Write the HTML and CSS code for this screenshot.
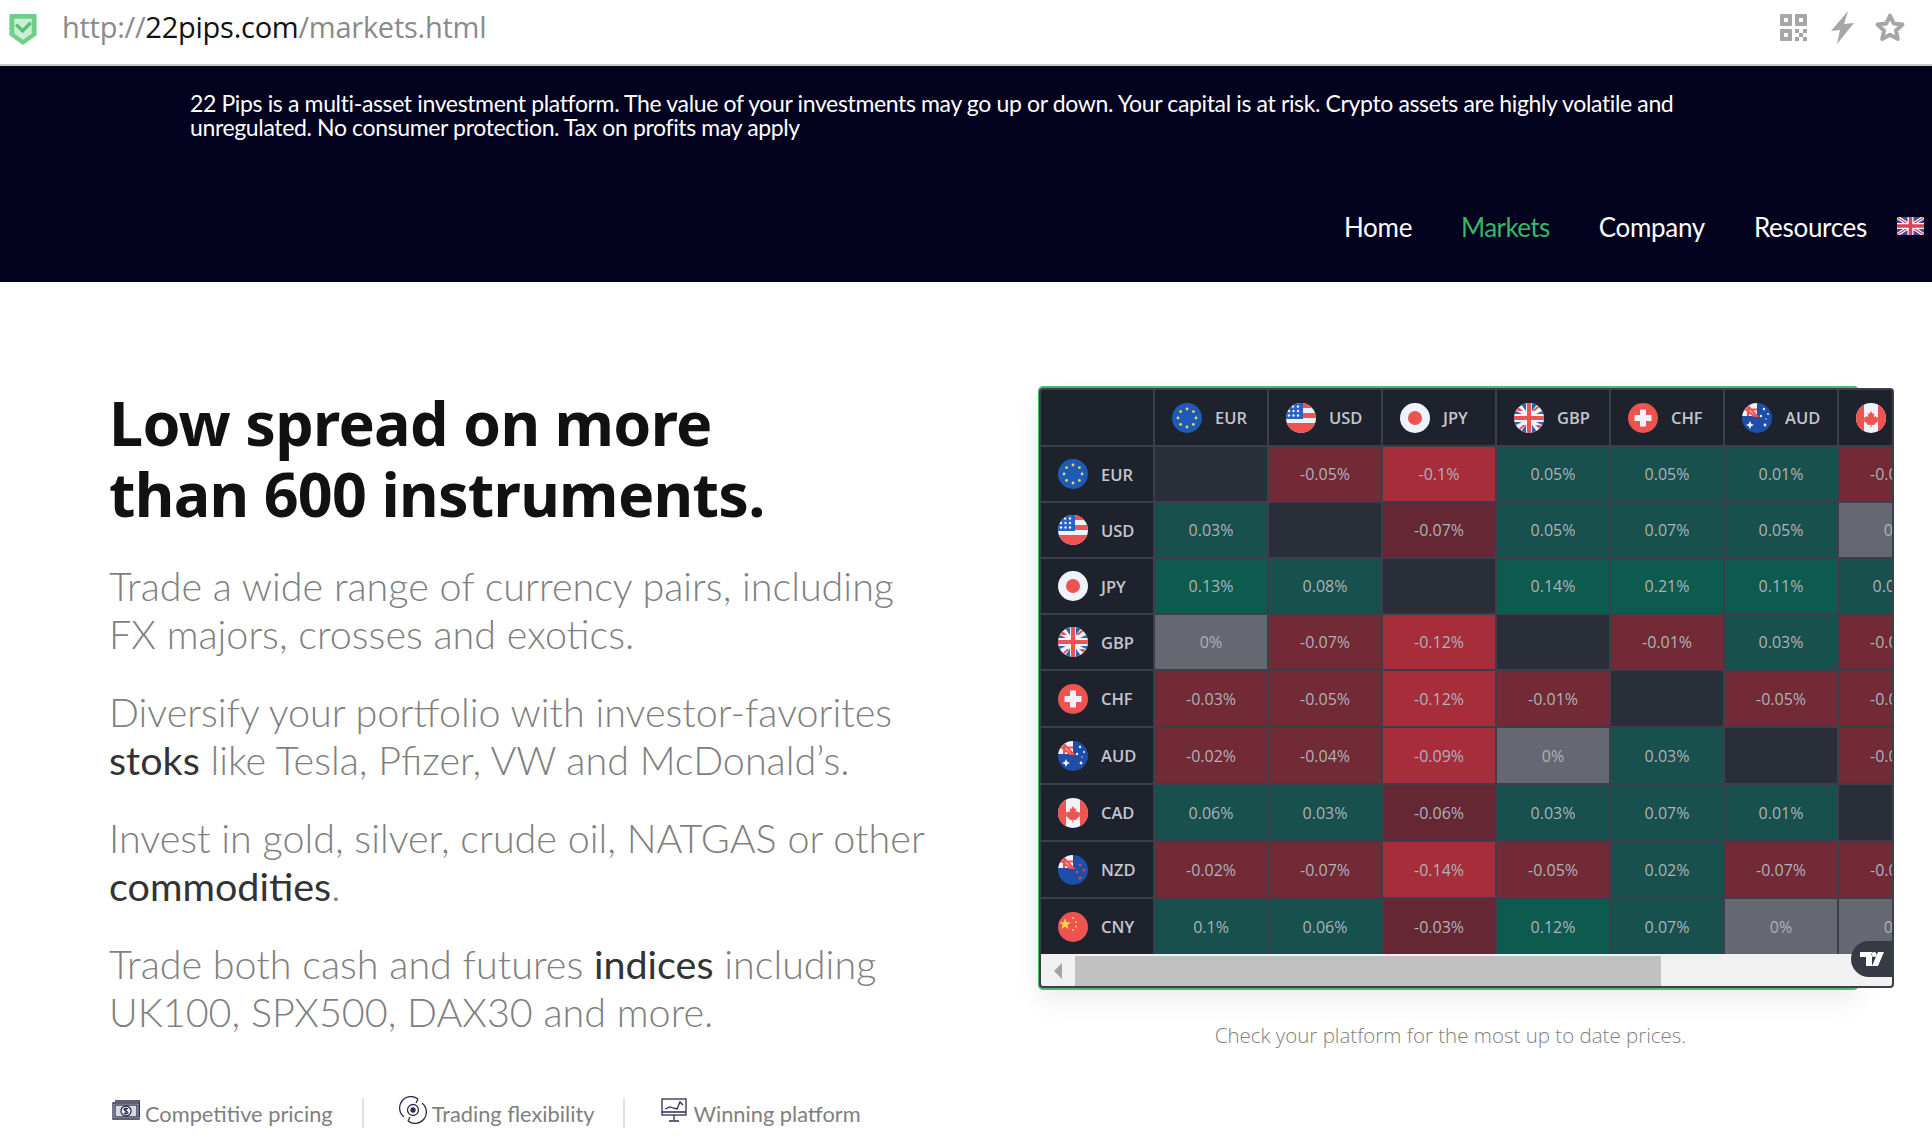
FILE: index.html
```html
<!DOCTYPE html>
<html lang="en">
<head>
  <meta charset="UTF-8">
  <title>22 Pips - Markets</title>
  <link rel="stylesheet" href="styles.css">
</head>
<body>
  <svg class="defs" width="0" height="0">
    <symbol id="f-eur" viewBox="0 0 30 30">
      <circle cx="15" cy="15" r="15" fill="#1e5bb8"/>
      <g fill="#f2d64b">
        <circle cx="15" cy="6" r="1.4"/><circle cx="21.4" cy="8.6" r="1.4"/><circle cx="24" cy="15" r="1.4"/><circle cx="21.4" cy="21.4" r="1.4"/>
        <circle cx="15" cy="24" r="1.4"/><circle cx="8.6" cy="21.4" r="1.4"/><circle cx="6" cy="15" r="1.4"/><circle cx="8.6" cy="8.6" r="1.4"/>
      </g>
    </symbol>
    <symbol id="f-usd" viewBox="0 0 30 30">
      <clipPath id="c-usd"><circle cx="15" cy="15" r="15"/></clipPath>
      <g clip-path="url(#c-usd)">
        <rect width="30" height="30" fill="#f0f3fa"/>
        <path d="M15 0h15v5H15zM15 10h15v5H15zM0 20h30v5H0z" fill="#ef5350"/>
        <path d="M0 25h30v5H0z" fill="#ef5350"/>
        <rect width="17" height="16" fill="#2962c4"/>
        <g fill="#f0f3fa">
          <circle cx="7" cy="3.5" r="1.2"/><circle cx="12" cy="3.5" r="1.2"/>
          <circle cx="3" cy="8" r="1.2"/><circle cx="7.5" cy="8" r="1.2"/><circle cx="12" cy="8" r="1.2"/>
          <circle cx="3" cy="12.5" r="1.2"/><circle cx="7.5" cy="12.5" r="1.2"/><circle cx="12" cy="12.5" r="1.2"/>
        </g>
      </g>
    </symbol>
    <symbol id="f-jpy" viewBox="0 0 30 30">
      <circle cx="15" cy="15" r="15" fill="#f0f3fa"/>
      <circle cx="15" cy="15" r="7" fill="#ef5350"/>
    </symbol>
    <symbol id="f-gbp" viewBox="0 0 30 30">
      <clipPath id="c-gbp"><circle cx="15" cy="15" r="15"/></clipPath>
      <g clip-path="url(#c-gbp)">
        <rect width="30" height="30" fill="#f0f3fa"/>
        <path d="M0 0l9 8H4L0 4zM30 30l-9-8h5l4 4zM30 0l-9 8h-3l9-8zM0 30l9-8h3l-9 8z" fill="#ef5350"/>
        <path d="M6 0h6v8zM18 0h6l-6 8zM6 30h6v-8zM18 30h6l-6-8zM0 7l8 4H0zM30 7l-8 4h8zM0 23l8-4H0zM30 23l-8-4h8z" fill="#2962c4"/>
        <path d="M13 0h4v13h13v4H17v13h-4V17H0v-4h13z" fill="#ef5350"/>
      </g>
    </symbol>
    <symbol id="f-chf" viewBox="0 0 30 30">
      <circle cx="15" cy="15" r="15" fill="#ef5350"/>
      <path d="M12 6.500h6V12h5.500v6H18v5.500h-6V18H6.500v-6H12z" fill="#f0f3fa"/>
    </symbol>
    <symbol id="f-aud" viewBox="0 0 30 30">
      <clipPath id="c-aud"><circle cx="15" cy="15" r="15"/></clipPath>
      <g clip-path="url(#c-aud)">
        <rect width="30" height="30" fill="#1e4fa8"/>
        <rect width="15" height="13" fill="#f0f3fa"/>
        <path d="M0 3l12 10h3L3 0H0zM0 6.500h15M6 0v13" stroke="#ef5350" stroke-width="2.200" fill="none"/>
        <g fill="#f0f3fa">
          <path d="M8 18l1.200 2.800L12 22l-2.800 1.200L8 26l-1.200-2.800L4 22l2.800-1.200z"/>
          <circle cx="22" cy="6" r="1.200"/><circle cx="26" cy="11" r="1"/><circle cx="19" cy="13" r="1.200"/><circle cx="23" cy="22" r="1.400"/><circle cx="24" cy="16" r=".7"/>
        </g>
      </g>
    </symbol>
    <symbol id="f-cad" viewBox="0 0 30 30">
      <clipPath id="c-cad"><circle cx="15" cy="15" r="15"/></clipPath>
      <g clip-path="url(#c-cad)">
        <rect width="30" height="30" fill="#f0f3fa"/>
        <path d="M0 0h8v30H0zM22 0h8v30h-8z" fill="#ef5350"/>
        <path d="M15 8l1.600 3 1.800-.8-.7 4 2-1.300.8 1.700 2-.3-1 2.700 1 .8-3.800 3-.3 1.300-2.900-.4v2.800h-1v-2.800l-2.900.4-.3-1.300-3.800-3 1-.8-1-2.700 2 .3.800-1.700 2 1.300-.7-4 1.800.8z" fill="#ef5350"/>
      </g>
    </symbol>
    <symbol id="f-nzd" viewBox="0 0 30 30">
      <clipPath id="c-nzd"><circle cx="15" cy="15" r="15"/></clipPath>
      <g clip-path="url(#c-nzd)">
        <rect width="30" height="30" fill="#1e4fa8"/>
        <rect width="15" height="13" fill="#f0f3fa"/>
        <path d="M0 3l12 10h3L3 0H0zM0 6.500h15M6 0v13" stroke="#ef5350" stroke-width="2.200" fill="none"/>
        <g fill="#d9445a">
          <circle cx="22" cy="10" r="1.300"/><circle cx="26" cy="15" r="1.300"/><circle cx="19" cy="17" r="1.300"/><circle cx="22" cy="23" r="1.500"/>
        </g>
      </g>
    </symbol>
    <symbol id="f-cny" viewBox="0 0 30 30">
      <circle cx="15" cy="15" r="15" fill="#ef5350"/>
      <path d="M7 6l1.500 4.200H13l-3.600 2.700 1.300 4.300L7 14.600l-3.700 2.600 1.300-4.300L1 10.200h4.500z" fill="#f7d64a"/>
      <g fill="#f7d64a"><circle cx="15" cy="6" r="1"/><circle cx="18" cy="10" r="1"/><circle cx="18" cy="14.500" r="1"/><circle cx="15" cy="18" r="1"/></g>
    </symbol>
  </svg>

  <div class="urlbar">
    <svg class="shield" viewBox="0 0 30 34">
      <path d="M2 1h26a1 1 0 0 1 1 1v21l-14 10L1 23V2a1 1 0 0 1 1-1z" fill="#6fcf87"/>
      <path d="M6 6h18v15l-9 6.500L6 21z" fill="#c9f0d3"/>
      <path d="M8 12l6.500 6.500L23 10" fill="none" stroke="#58bf75" stroke-width="3.500"/>
    </svg>
    <div class="url">http://<b>22pips.com</b>/markets.html</div>
    <div class="bar-icons">
      <svg class="qr" viewBox="0 0 27 27" fill="#a6a6a6">
        <path fill-rule="evenodd" d="M1 0h10a1 1 0 0 1 1 1v10a1 1 0 0 1-1 1H1a1 1 0 0 1-1-1V1a1 1 0 0 1 1-1zm3 4v4h4V4zM16 0h10a1 1 0 0 1 1 1v10a1 1 0 0 1-1 1H16a1 1 0 0 1-1-1V1a1 1 0 0 1 1-1zm3 4v4h4V4zM1 15h10a1 1 0 0 1 1 1v10a1 1 0 0 1-1 1H1a1 1 0 0 1-1-1V16a1 1 0 0 1 1-1zm3 4v4h4v-4z"/>
        <path d="M15 15h4v4h-4zM23 15h4v4h-4zM19 19h4v4h-4zM15 23h4v4h-4zM23 23h4v4h-4z"/>
      </svg>
      <svg class="bolt" viewBox="0 0 23 33"><path d="M17 0L0 20l9-1-3 14L23 12l-10 1z" fill="#a6a6a6"/></svg>
      <svg class="star" viewBox="0 0 32 30"><path d="M16 3.500l3.700 8 8.800 1-6.500 6 1.800 8.600L16 22.700l-7.800 4.400L10 18.500l-6.500-6 8.800-1z" fill="none" stroke="#a6a6a6" stroke-width="4" stroke-linejoin="round"/></svg>
    </div>
  </div>

  <header class="top">
    <p class="risk">22 Pips is a multi-asset investment platform. The value of your investments may go up or down. Your capital is at risk. Crypto assets are highly volatile and<br>unregulated. No consumer protection. Tax on profits may apply</p>
    <nav class="nav">
      <a href="#">Home</a>
      <a href="#" class="active">Markets</a>
      <a href="#">Company</a>
      <a href="#">Resources</a>
      <svg class="lang" viewBox="0 0 27 18">
        <rect width="27" height="18" fill="#3f4a9c"/>
        <path d="M0 0l27 18M27 0L0 18" stroke="#fff" stroke-width="3.500"/>
        <path d="M0 0l27 18M27 0L0 18" stroke="#d8425a" stroke-width="1.200"/>
        <path d="M13.500 0v18M0 9h27" stroke="#fff" stroke-width="6"/>
        <path d="M13.500 0v18M0 9h27" stroke="#d8425a" stroke-width="3.500"/>
      </svg>
    </nav>
  </header>

  <main class="hero">
    <section class="intro">
      <h1>Low spread on more<br>than 600 instruments.</h1>
      <p>Trade a wide range of currency pairs, including<br>FX majors, crosses and exotics.</p>
      <p>Diversify your portfolio with investor-favorites<br><b>stoks</b> like Tesla, Pfizer, VW and McDonald’s.</p>
      <p>Invest in gold, silver, crude oil, NATGAS or other<br><b>commodities</b>.</p>
      <p>Trade both cash and futures <b>indices</b> including<br>UK100, SPX500, DAX30 and more.</p>
      <ul class="features">
        <li>
          <svg class="feat-icon" viewBox="0 0 28 20" fill="none" stroke="#2b2b4d" stroke-width="1.300">
            <path d="M1 3h26v16H1zM3 1h25v16"/>
            <rect x="3" y="5" width="22" height="12" fill="#d9d9e2"/>
            <circle cx="14" cy="11" r="5" fill="#fff"/>
            <path d="M14 7.500v7M16 9c-1-1-4-1-4 .6s4 1.200 4 2.800-3 1.600-4 .6"/>
          </svg>
          Competitive pricing
        </li>
        <li>
          <svg class="feat-icon tall" viewBox="0 0 26 28" fill="none" stroke="#2b2b4d" stroke-width="1.300">
            <path d="M4 21A11 11 0 0 1 18 3M18 3l-4-2M18 3l-2 4M22 7a11 11 0 0 1-14 18M8 25l4 2M8 25l2-4"/>
            <circle cx="13" cy="14" r="5.500"/>
            <circle cx="13" cy="14" r="2" fill="#2b2b4d"/>
          </svg>
          Trading flexibility
        </li>
        <li>
          <svg class="feat-icon" viewBox="0 0 26 24" fill="none" stroke="#2b2b4d" stroke-width="1.300">
            <rect x="1" y="1" width="24" height="16"/>
            <path d="M1 14h24M4 11l5-2 3 1 4 1 3-7 3 3M13 17v5M8 23h10"/>
          </svg>
          Winning platform
        </li>
      </ul>
    </section>

    <section class="side">
      <div class="card">
        <div class="widget">
          <div class="clip">
            <div class="matrix">
              <div class="cell th"></div>
              <div class="cell th"><svg class="flag"><use href="#f-eur"/></svg>EUR</div>
              <div class="cell th"><svg class="flag"><use href="#f-usd"/></svg>USD</div>
              <div class="cell th"><svg class="flag"><use href="#f-jpy"/></svg>JPY</div>
              <div class="cell th"><svg class="flag"><use href="#f-gbp"/></svg>GBP</div>
              <div class="cell th"><svg class="flag"><use href="#f-chf"/></svg>CHF</div>
              <div class="cell th"><svg class="flag"><use href="#f-aud"/></svg>AUD</div>
              <div class="cell th"><svg class="flag"><use href="#f-cad"/></svg>CAD</div>

              <div class="cell th"><svg class="flag"><use href="#f-eur"/></svg>EUR</div>
              <div class="cell e"></div>
              <div class="cell r1">-0.05%</div>
              <div class="cell r2">-0.1%</div>
              <div class="cell g1">0.05%</div>
              <div class="cell g1">0.05%</div>
              <div class="cell g1">0.01%</div>
              <div class="cell r1">-0.06%</div>

              <div class="cell th"><svg class="flag"><use href="#f-usd"/></svg>USD</div>
              <div class="cell g1">0.03%</div>
              <div class="cell e"></div>
              <div class="cell r0">-0.07%</div>
              <div class="cell g1">0.05%</div>
              <div class="cell g1">0.07%</div>
              <div class="cell g1">0.05%</div>
              <div class="cell z">0%</div>

              <div class="cell th"><svg class="flag"><use href="#f-jpy"/></svg>JPY</div>
              <div class="cell g2">0.13%</div>
              <div class="cell g1">0.08%</div>
              <div class="cell e"></div>
              <div class="cell g2">0.14%</div>
              <div class="cell g2">0.21%</div>
              <div class="cell g2">0.11%</div>
              <div class="cell g1">0.06%</div>

              <div class="cell th"><svg class="flag"><use href="#f-gbp"/></svg>GBP</div>
              <div class="cell z">0%</div>
              <div class="cell r1">-0.07%</div>
              <div class="cell r2">-0.12%</div>
              <div class="cell e"></div>
              <div class="cell r1">-0.01%</div>
              <div class="cell g1">0.03%</div>
              <div class="cell r1">-0.04%</div>

              <div class="cell th"><svg class="flag"><use href="#f-chf"/></svg>CHF</div>
              <div class="cell r1">-0.03%</div>
              <div class="cell r1">-0.05%</div>
              <div class="cell r2">-0.12%</div>
              <div class="cell r1">-0.01%</div>
              <div class="cell e"></div>
              <div class="cell r1">-0.05%</div>
              <div class="cell r1">-0.03%</div>

              <div class="cell th"><svg class="flag"><use href="#f-aud"/></svg>AUD</div>
              <div class="cell r1">-0.02%</div>
              <div class="cell r1">-0.04%</div>
              <div class="cell r2">-0.09%</div>
              <div class="cell z">0%</div>
              <div class="cell g1">0.03%</div>
              <div class="cell e"></div>
              <div class="cell r1">-0.01%</div>

              <div class="cell th"><svg class="flag"><use href="#f-cad"/></svg>CAD</div>
              <div class="cell g1">0.06%</div>
              <div class="cell g1">0.03%</div>
              <div class="cell r0">-0.06%</div>
              <div class="cell g1">0.03%</div>
              <div class="cell g1">0.07%</div>
              <div class="cell g1">0.01%</div>
              <div class="cell e"></div>

              <div class="cell th"><svg class="flag"><use href="#f-nzd"/></svg>NZD</div>
              <div class="cell r1">-0.02%</div>
              <div class="cell r1">-0.07%</div>
              <div class="cell r2">-0.14%</div>
              <div class="cell r1">-0.05%</div>
              <div class="cell g1">0.02%</div>
              <div class="cell r1">-0.07%</div>
              <div class="cell r1">-0.02%</div>

              <div class="cell th"><svg class="flag"><use href="#f-cny"/></svg>CNY</div>
              <div class="cell g1">0.1%</div>
              <div class="cell g1">0.06%</div>
              <div class="cell r0">-0.03%</div>
              <div class="cell g2">0.12%</div>
              <div class="cell g1">0.07%</div>
              <div class="cell z">0%</div>
              <div class="cell z">0%</div>
            </div>
            <div class="scrollbar">
              <div class="sb-btn"></div>
              <div class="sb-thumb"></div>
            </div>
            <div class="tv-badge">
              <svg viewBox="0 0 24 14" width="24" height="14" fill="#fff"><path d="M0 0h12v14H6V5H0zM14 5a2.500 2.500 0 1 0 0-5 2.500 2.500 0 0 0 0 5zM18 0h6l-6 14h-6z"/></svg>
            </div>
          </div>
        </div>
      </div>
      <p class="caption">Check your platform for the most up to date prices.</p>
    </section>
  </main>
</body>
</html>
```

FILE: styles.css
```css
body { margin: 0; background: #fff; font-family: "Lato", "Open Sans", sans-serif; overflow: hidden; }
.defs { position: absolute; }

.urlbar {
  height: 64px; display: flex; align-items: center; padding: 0 26px 0 8px;
  border-bottom: 2px solid #c8c8c8;
}
.shield { width: 30px; height: 33px; margin: -6px 24px 0 0; }
.url { font-family: "Open Sans", sans-serif; font-size: 29px; color: #8a8a8a; letter-spacing: -0.25px; margin-top: -11px; }
.url b { font-weight: 400; color: #111; }
.bar-icons { margin: -10px 0 0 auto; display: flex; align-items: center; gap: 20px; }
.qr { width: 27px; height: 27px; margin-right: 4px; }
.bolt { width: 23px; height: 33px; }
.star { width: 32px; height: 30px; }

.top { height: 216px; background: #02021f; color: #fff; box-sizing: border-box; padding-top: 25px; }
.risk { margin: 0 0 0 190px; font-size: 23px; line-height: 24px; font-weight: 400; letter-spacing: -0.36px; }
.nav { display: flex; justify-content: flex-end; align-items: center; gap: 49px; margin-top: 72px; padding-right: 8px; }
.nav a { color: #fff; text-decoration: none; font-size: 26px; font-weight: 400; letter-spacing: -0.3px; }
.nav a.active { color: #35b866; letter-spacing: -0.6px; }
.lang { width: 27px; height: 18px; margin: -2px 0 0 -19px; }

.hero { display: flex; }
.intro { flex: none; width: 1038px; box-sizing: border-box; padding: 105px 0 0 109px; }
h1 { margin: 0 0 33px; font-family: "Noto Sans", sans-serif; font-size: 61px; line-height: 71px; font-weight: 700; letter-spacing: -0.7px; color: #111; }
.intro p { margin: 0 0 30px; font-size: 39.500px; line-height: 48px; font-weight: 300; color: #7f7f7f; white-space: nowrap; }
.intro p b { font-weight: 400; color: #333; }

.features { list-style: none; display: flex; margin: 62px 0 0 3px; padding: 0; }
.features li {
  display: flex; align-items: center; gap: 5px; height: 30px; padding-right: 29px; margin-right: 35px;
  border-right: 2px solid #e2e2e2; font-size: 21.800px; color: #7f7f7f; white-space: nowrap;
}
.features li:last-child { border: 0; }
.feat-icon { width: 28px; height: 24px; margin-top: -6px; }
.feat-icon.tall { height: 28px; }

.side { padding-top: 104px; }
.card {
  width: 817px; height: 600px; border: 2px solid #4fb873; border-radius: 5px;
  box-shadow: 0 12px 24px rgba(0, 0, 0, 0.07);
}
.widget {
  width: 851px; height: 596px; margin-left: -1px; border: 2px solid #3c3f49; border-radius: 4px;
  background: #3c3f49; position: relative;
}
.clip { height: 100%; overflow: hidden; position: relative; border-radius: 2px; }
.matrix {
  display: grid; grid-template-columns: repeat(8, 112px); grid-template-rows: 55px repeat(4, 54px) repeat(5, 55px);
  gap: 2px; width: 910px; font-family: "Open Sans", sans-serif;
}
.cell { display: flex; align-items: center; justify-content: center; font-size: 16px; color: #aeb2ba; }
.th { background: #1e222d; gap: 13px; justify-content: flex-start; padding-left: 17px; font-size: 16.500px; font-weight: 600; color: #c3c6cd; }
.flag { width: 30px; height: 30px; }
.e { background: #2a2e39; }
.r0 { background: #652733; }
.r1 { background: #722a36; }
.r2 { background: #a82d3a; }
.g1 { background: #17504d; }
.g2 { background: #0c5b4e; }
.z { background: #666871; }

.scrollbar { height: 32px; display: flex; background: #f1f1f1; position: relative; }
.sb-btn { width: 34px; position: relative; }
.sb-btn::after {
  content: ""; position: absolute; left: 13px; top: 9px;
  border: 8px solid transparent; border-left: 0; border-right-color: #a3a3a3;
}
.sb-thumb { width: 586px; height: 30px; margin-top: 2px; background: #c1c1c1; }
.tv-badge {
  position: absolute; right: 0; bottom: 9px; width: 41px; height: 36px;
  border-radius: 18px 0 0 18px; background: #363a45; display: flex; align-items: center; justify-content: center;
}

.caption { margin: 31px 0 0; padding-left: 3px; width: 819px; text-align: center; font-family: "Open Sans", sans-serif; font-size: 20.500px; font-weight: 300; color: #7f7f7f; }
```
